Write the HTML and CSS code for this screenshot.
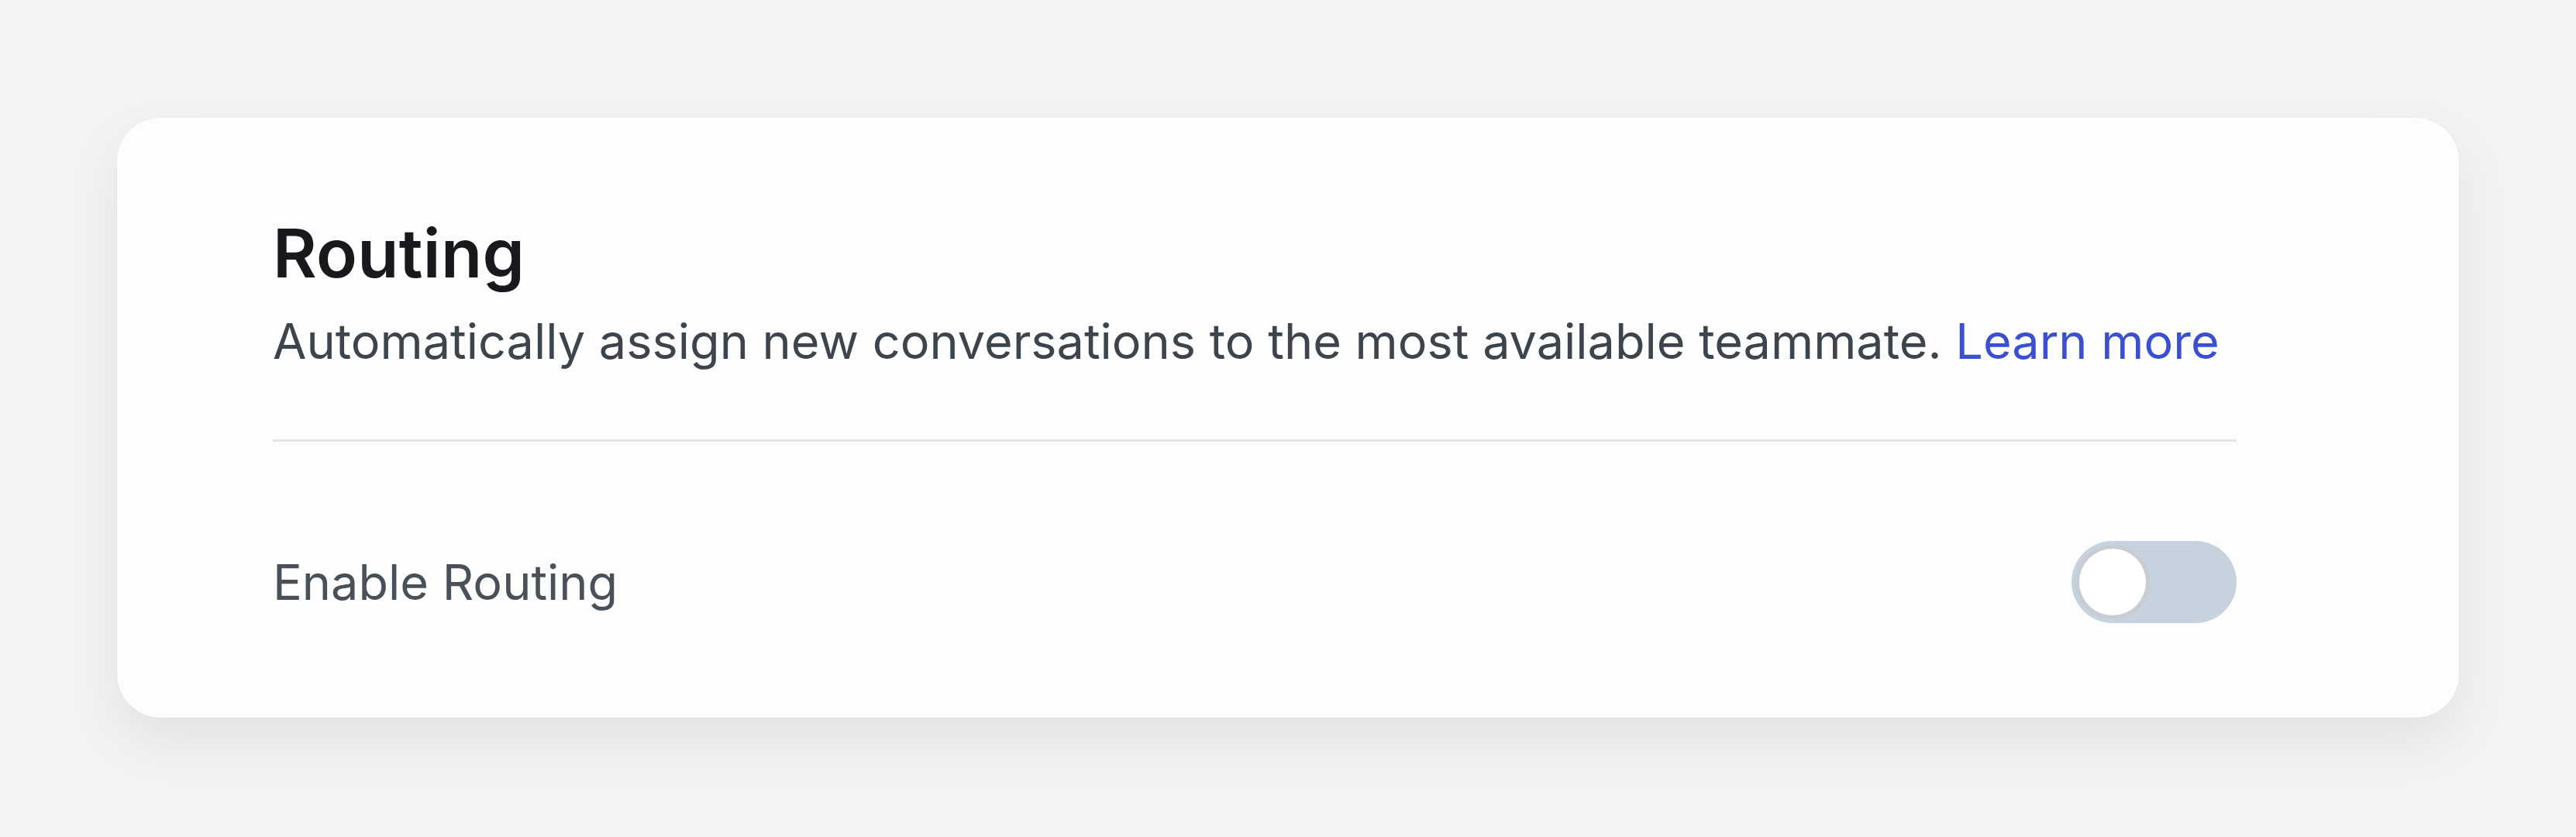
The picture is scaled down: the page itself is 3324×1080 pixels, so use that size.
FILE: index.html
```html
<!DOCTYPE html>
<html lang="en">
<head>
<meta charset="utf-8">
<title>Routing</title>
<link rel="stylesheet" href="styles.css">
</head>
<body>
<main class="page">
  <section class="card">
    <header class="card-head">
      <h1 class="title">Routing</h1>
      <p class="desc">Automatically assign new conversations to the most available teammate. <a class="link" href="#">Learn more</a></p>
    </header>
    <hr class="divider">
    <div class="row">
      <span class="row-label">Enable Routing</span>
      <button class="toggle" type="button" aria-pressed="false"><span class="knob"></span></button>
    </div>
  </section>
</main>
</body>
</html>
```
FILE: styles.css
```css
html, body {
  margin: 0;
  padding: 0;
}
body {
  width: 3324px;
  height: 1080px;
  background: #f3f3f3;
  font-family: "Inter", "Liberation Sans", sans-serif;
  overflow: hidden;
}
.page {
  padding: 152px 151px 0 151px;
}
.card {
  width: 3022px;
  box-sizing: border-box;
  background: #fdfdfd;
  border-radius: 56px;
  padding: 123px 287px 122px 201px;
  box-shadow: 0 30px 70px rgba(0, 0, 0, 0.07), 0 0 0 1px rgba(0, 0, 0, 0.02);
}
.card-head {
  display: flex;
  flex-direction: column;
  gap: 21px;
}
.title {
  margin: 0;
  font-size: 87px;
  line-height: 104px;
  font-weight: 600;
  color: #17191c;
  letter-spacing: 0.3px;
}
.desc {
  margin: 0;
  font-size: 63px;
  line-height: 80px;
  font-weight: 400;
  color: #3e444b;
  letter-spacing: 0;
}
.link {
  color: #3a4fd1;
  text-decoration: none;
}
.divider {
  margin: 87px 0 0 0;
  border: 0;
  height: 3px;
  background: #e4e4e4;
}
.row {
  margin-top: 128px;
  display: flex;
  align-items: center;
  justify-content: space-between;
}
.row-label {
  font-size: 63px;
  line-height: 80px;
  color: #4a5058;
  letter-spacing: 0;
}
.toggle {
  width: 213px;
  height: 106px;
  border: 0;
  padding: 10px;
  border-radius: 53px;
  background: #c6d2dd;
  display: flex;
  align-items: center;
  box-sizing: border-box;
}
.knob {
  width: 86px;
  height: 86px;
  border-radius: 50%;
  background: #ffffff;
  box-shadow: 0 0 0 5px rgba(200, 200, 200, 0.45);
}
```
